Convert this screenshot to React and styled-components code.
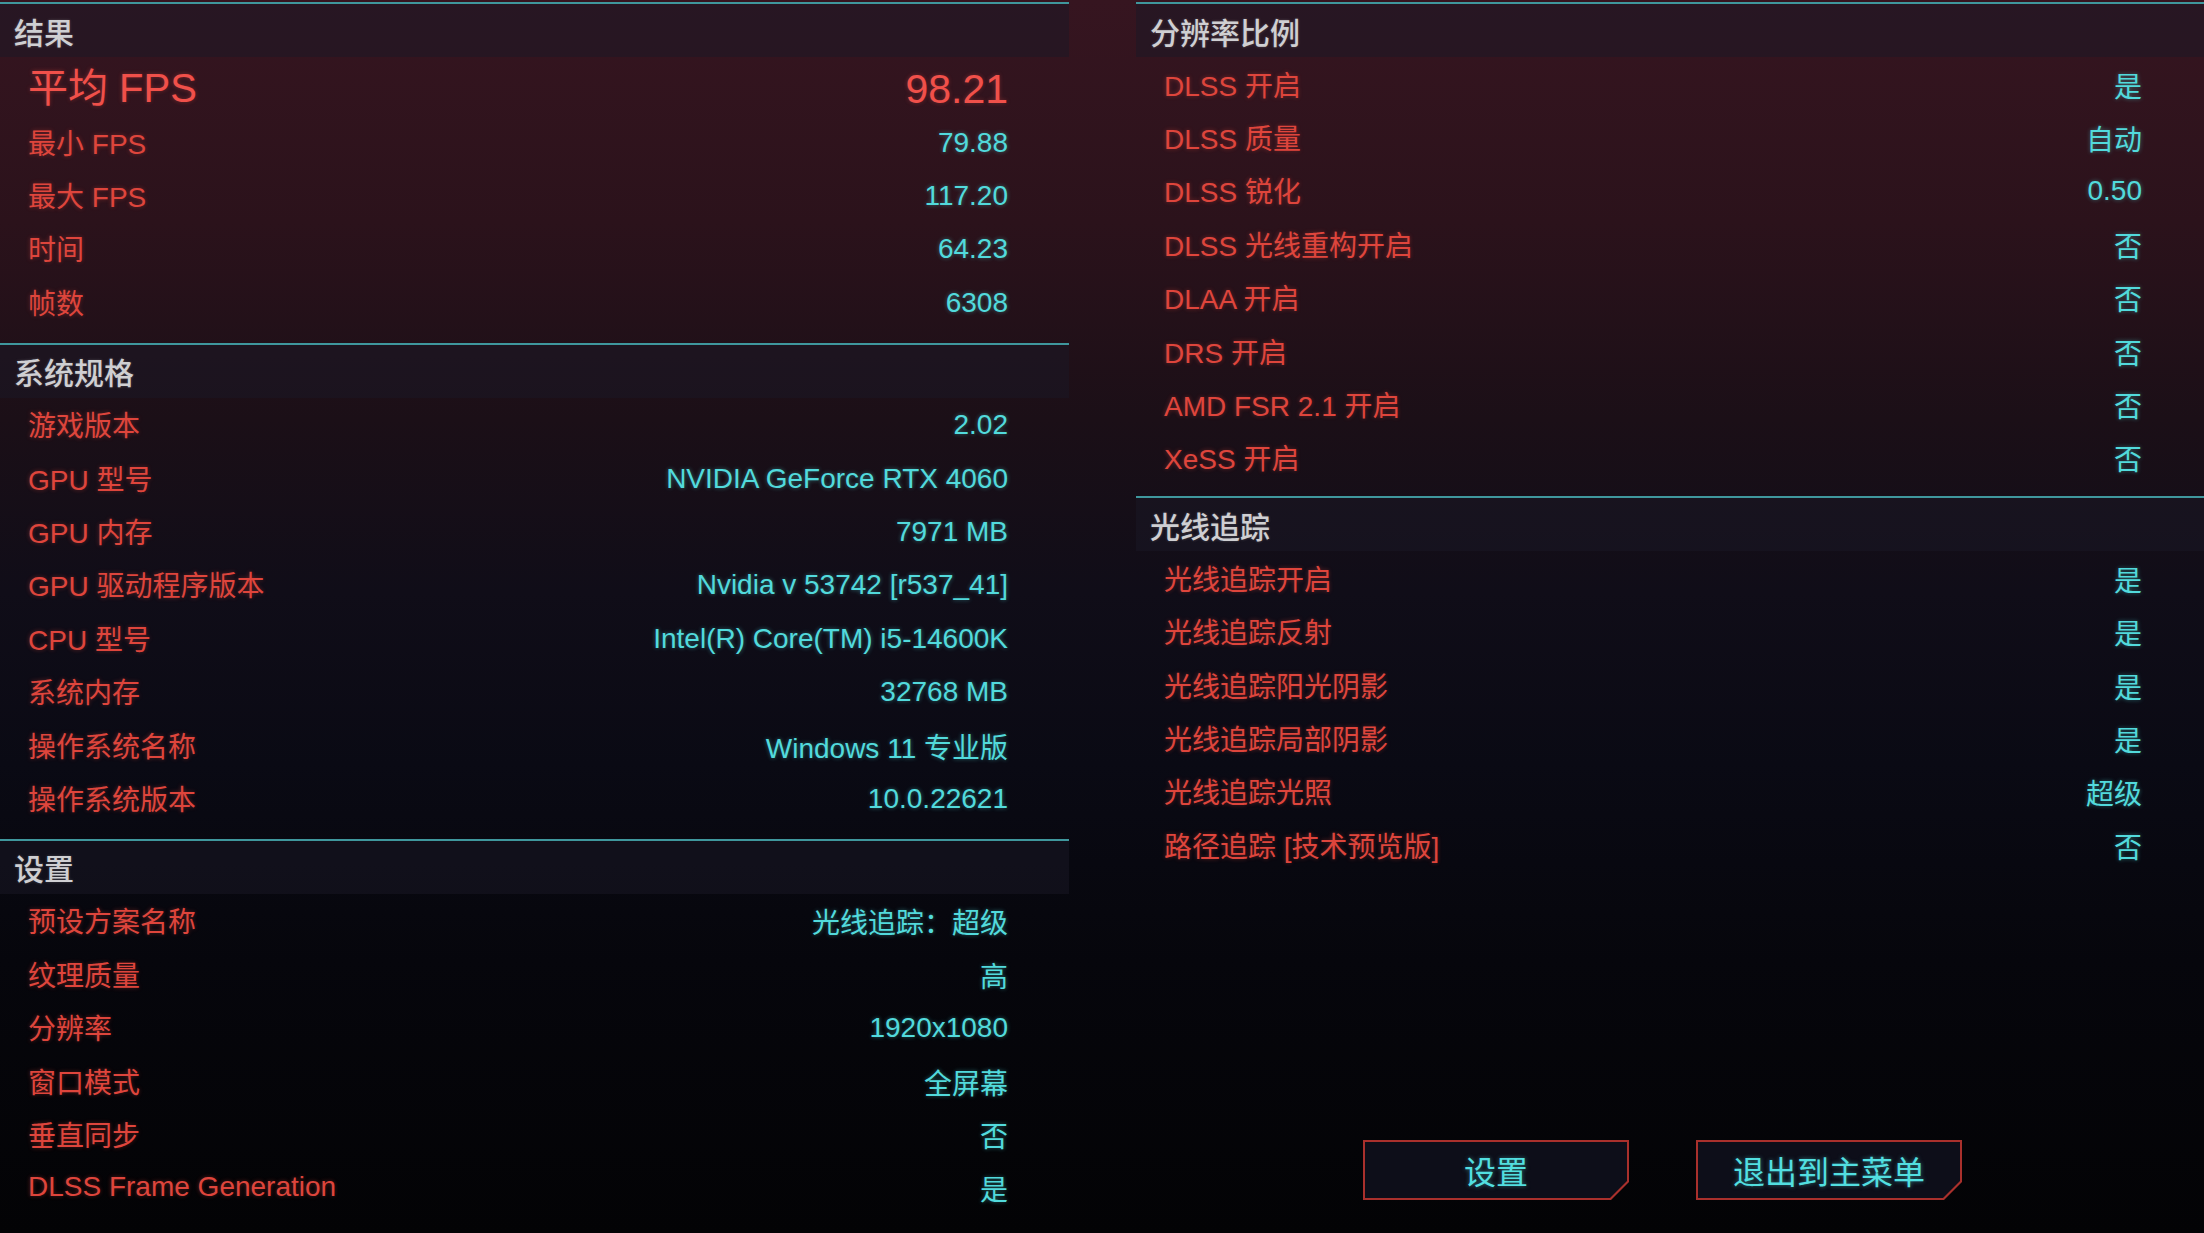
import React from 'react';
import styled, { createGlobalStyle } from 'styled-components';

const GlobalStyle = createGlobalStyle`
  html, body {
    margin: 0;
    padding: 0;
  }
  body {
    width: 2204px;
    height: 1233px;
    overflow: hidden;
    background: linear-gradient(
      180deg,
      #361520 0%,
      #2b121b 18%,
      #1b0f17 34%,
      #100d18 48%,
      #0a0a14 62%,
      #06060c 78%,
      #030305 100%
    );
    font-family: "Liberation Sans", "Noto Sans CJK SC", sans-serif;
  }
`;

const Page = styled.div`
  display: grid;
  grid-template-columns: 1069px 1fr;
  column-gap: 67px;
  height: 1233px;
  padding-top: 2px;
  box-sizing: border-box;
`;

const Column = styled.div`
  display: flex;
  flex-direction: column;
  min-height: 0;
`;

const Section = styled.section`
  border-top: 2px solid #3f979d;
  padding-bottom: ${p => p.$pad ?? 14}px;
`;

const SectionHeader = styled.div`
  height: 53px;
  display: flex;
  align-items: center;
  padding-left: 14px;
  background: rgba(26, 24, 38, 0.5);
  color: #cfcfd2;
  font-size: 30px;
  font-weight: 500;
  text-shadow: 0 0 3px rgba(220, 220, 220, 0.25);
`;

const Row = styled.div`
  height: ${p => (p.$big ? 58 : 53.4)}px;
  display: flex;
  align-items: center;
  justify-content: space-between;
  padding: 0 ${p => p.$right}px 0 28px;
`;

const Label = styled.span`
  color: ${p => (p.$big ? '#f0504a' : '#de453c')};
  font-size: ${p => (p.$big ? 40 : 28)}px;
  font-weight: 400;
  padding-bottom: ${p => (p.$big ? 3 : 0)}px;
  text-shadow: 0 0 4px rgba(230, 70, 60, 0.4);
  white-space: nowrap;
`;

const Value = styled.span`
  color: ${p => (p.$big ? '#f0504a' : '#52dadc')};
  font-size: ${p => (p.$big ? 41 : 28)}px;
  font-weight: 400;
  padding-top: ${p => (p.$big ? 6 : 2)}px;
  text-shadow: ${p =>
    p.$big ? '0 0 4px rgba(240, 80, 74, 0.35)' : '0 0 4px rgba(80, 220, 220, 0.45)'};
  white-space: nowrap;
`;

const ButtonBar = styled.div`
  margin-top: auto;
  margin-bottom: 33px;
  display: flex;
  gap: 67px;
  padding-left: 227px;
`;

const ButtonFrame = styled.button`
  width: 266px;
  height: 60px;
  padding: 2px;
  border: none;
  background: #a9302c;
  cursor: pointer;
  clip-path: polygon(0 0, 100% 0, 100% calc(100% - 18px), calc(100% - 18px) 100%, 0 100%);
`;

const ButtonFace = styled.span`
  display: flex;
  align-items: center;
  justify-content: center;
  width: 100%;
  height: 100%;
  background: #0d0e19;
  color: #52dfe0;
  font-family: "Liberation Sans", "Noto Sans CJK SC", sans-serif;
  font-size: 32px;
  font-weight: 400;
  text-shadow: 0 0 4px rgba(80, 220, 220, 0.5);
  clip-path: polygon(0 0, 100% 0, 100% calc(100% - 17px), calc(100% - 17px) 100%, 0 100%);
`;

const results = [
  ['平均 FPS', '98.21', true],
  ['最小 FPS', '79.88'],
  ['最大 FPS', '117.20'],
  ['时间', '64.23'],
  ['帧数', '6308'],
];

const specs = [
  ['游戏版本', '2.02'],
  ['GPU 型号', 'NVIDIA GeForce RTX 4060'],
  ['GPU 内存', '7971 MB'],
  ['GPU 驱动程序版本', 'Nvidia v 53742 [r537_41]'],
  ['CPU 型号', 'Intel(R) Core(TM) i5-14600K'],
  ['系统内存', '32768 MB'],
  ['操作系统名称', 'Windows 11 专业版'],
  ['操作系统版本', '10.0.22621'],
];

const settings = [
  ['预设方案名称', '光线追踪：超级'],
  ['纹理质量', '高'],
  ['分辨率', '1920x1080'],
  ['窗口模式', '全屏幕'],
  ['垂直同步', '否'],
  ['DLSS Frame Generation', '是'],
];

const scaling = [
  ['DLSS 开启', '是'],
  ['DLSS 质量', '自动'],
  ['DLSS 锐化', '0.50'],
  ['DLSS 光线重构开启', '否'],
  ['DLAA 开启', '否'],
  ['DRS 开启', '否'],
  ['AMD FSR 2.1 开启', '否'],
  ['XeSS 开启', '否'],
];

const rayTracing = [
  ['光线追踪开启', '是'],
  ['光线追踪反射', '是'],
  ['光线追踪阳光阴影', '是'],
  ['光线追踪局部阴影', '是'],
  ['光线追踪光照', '超级'],
  ['路径追踪 [技术预览版]', '否'],
];

const StatSection = ({ title, rows, right, pad }) => (
  <Section $pad={pad}>
    <SectionHeader>{title}</SectionHeader>
    {rows.map(([label, value, big]) => (
      <Row key={label} $big={big} $right={right}>
        <Label $big={big}>{label}</Label>
        <Value $big={big}>{value}</Value>
      </Row>
    ))}
  </Section>
);

export default function App() {
  return (
    <>
      <GlobalStyle />
      <Page>
        <Column>
          <StatSection title="结果" rows={results} right={61} />
          <StatSection title="系统规格" rows={specs} right={61} />
          <StatSection title="设置" rows={settings} right={61} pad={0} />
        </Column>
        <Column>
          <StatSection title="分辨率比例" rows={scaling} right={62} pad={12} />
          <StatSection title="光线追踪" rows={rayTracing} right={62} pad={0} />
          <ButtonBar>
            <ButtonFrame>
              <ButtonFace>设置</ButtonFace>
            </ButtonFrame>
            <ButtonFrame>
              <ButtonFace>退出到主菜单</ButtonFace>
            </ButtonFrame>
          </ButtonBar>
        </Column>
      </Page>
    </>
  );
}
